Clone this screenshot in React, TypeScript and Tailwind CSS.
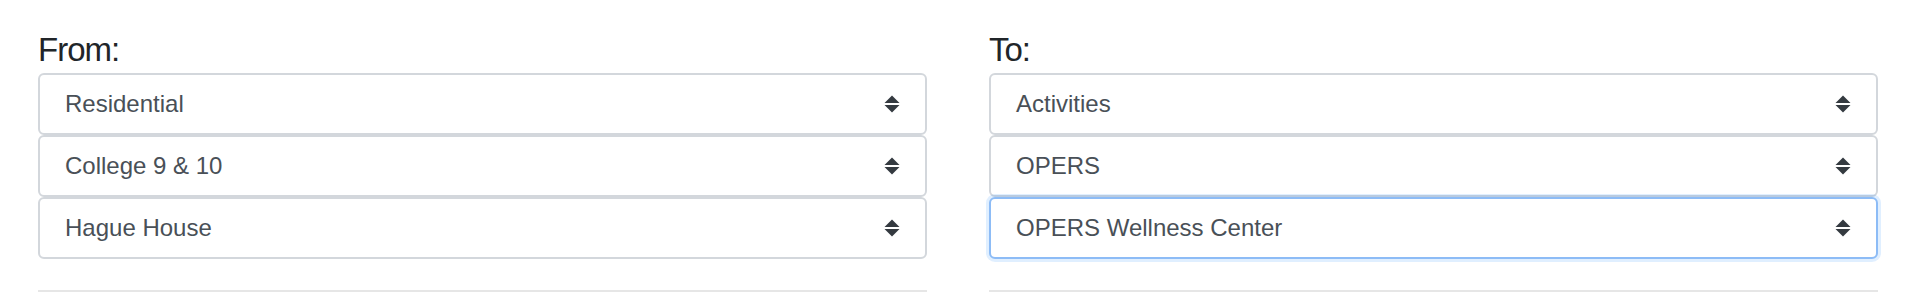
import React from "react";

function Arrows() {
  return (
    <svg width="16" height="18" viewBox="0 0 16 18" className="shrink-0">
      <path d="M8 0.5 L15.5 8 L0.5 8 Z" fill="#343a40" />
      <path d="M0.5 10 L15.5 10 L8 17.5 Z" fill="#343a40" />
    </svg>
  );
}

function Select({ value, focused }: { value: string; focused?: boolean }) {
  return (
    <div
      className={
        focused
          ? "relative z-10 flex h-[62px] items-center justify-between rounded-[6px] border-2 border-[#8dbcf6] bg-white pl-[25px] pr-[25px] shadow-[0_0_0_3px_rgba(0,123,255,0.12)]"
          : "flex h-[62px] items-center justify-between rounded-[6px] border-2 border-[#d3d7dc] bg-white pl-[25px] pr-[25px]"
      }
    >
      <span className="text-[24px] leading-[28px] text-[#495057]">{value}</span>
      <Arrows />
    </div>
  );
}

function Column({ label, values, focusLast }: { label: string; values: string[]; focusLast?: boolean }) {
  return (
    <div className="flex flex-1 flex-col">
      <div className="mb-[5px] text-[33px] leading-[36px] tracking-[-1px] text-[#212529]">{label}</div>
      <div className="flex flex-col">
        {values.map((v, i) => (
          <Select key={i} value={v} focused={focusLast && i === values.length - 1} />
        ))}
      </div>
      <div className="mt-[31px] h-[2px] bg-[#e6e6e6]" />
    </div>
  );
}

export default function App() {
  return (
    <div
      className="flex h-[302px] w-[1916px] gap-[62px] bg-white px-[38px] pt-[32px]"
      style={{ fontFamily: '"Liberation Sans", Arial, sans-serif' }}
    >
      <Column label="From:" values={["Residential", "College 9 & 10", "Hague House"]} />
      <Column label="To:" values={["Activities", "OPERS", "OPERS Wellness Center"]} focusLast />
    </div>
  );
}
